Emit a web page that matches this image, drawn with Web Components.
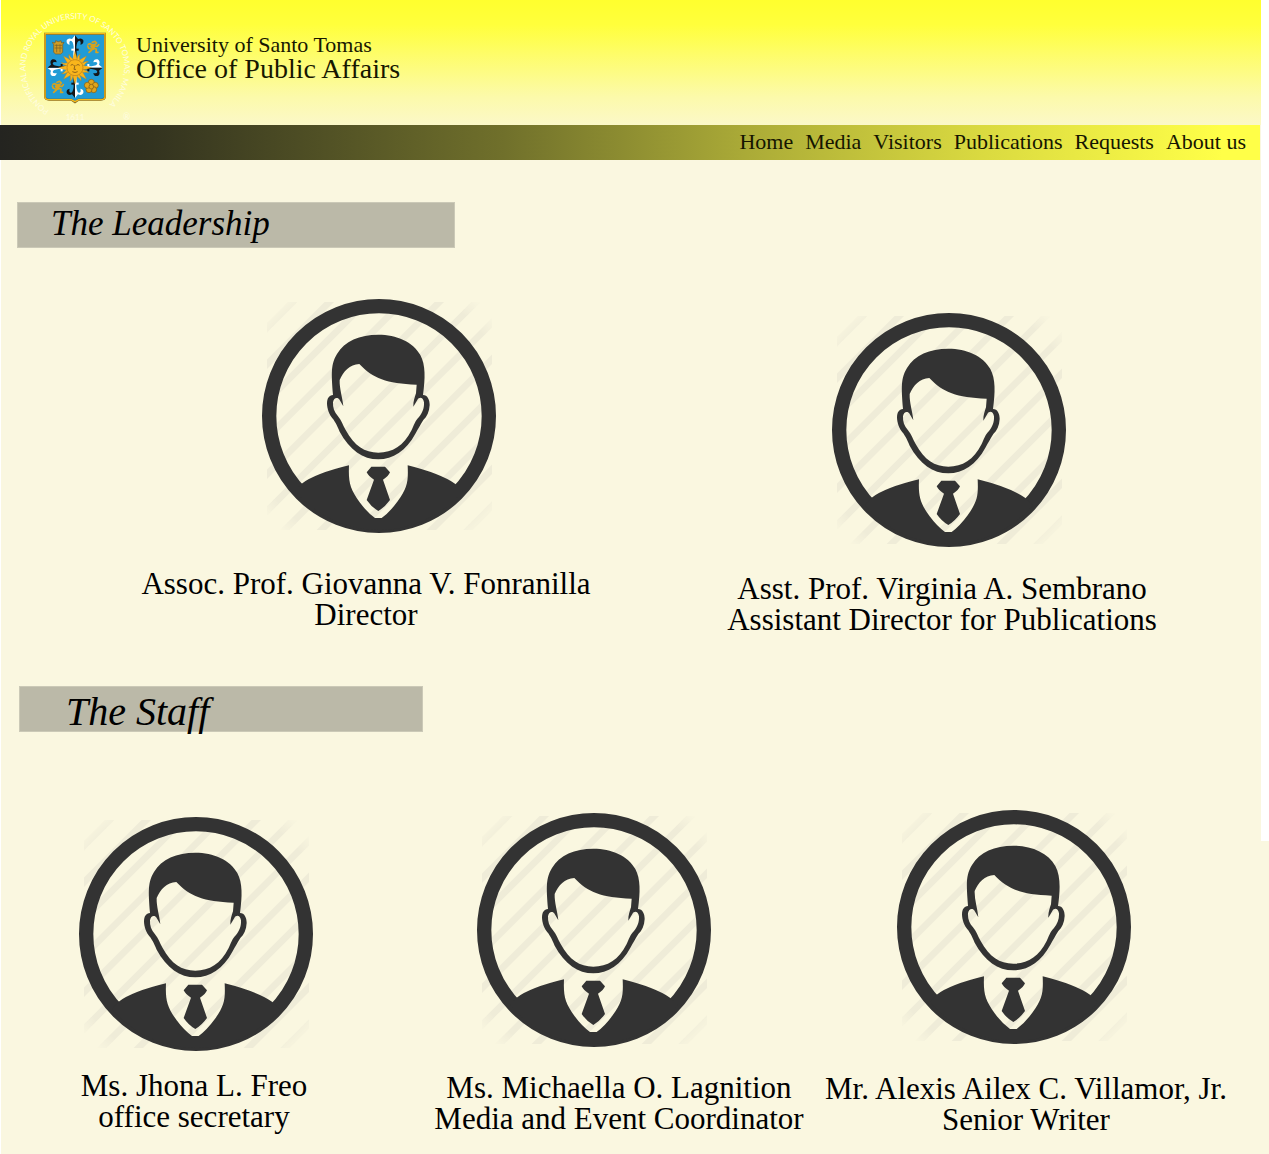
<!DOCTYPE html>
<html lang="en">
<head>
<meta charset="utf-8">
<title>UST Office of Public Affairs</title>
<style>
body { margin: 0; background: #fff; color: #000; font-family: "Liberation Serif", serif; }
</style>
</head>
<body>
<opa-page></opa-page>
<script>
const define = (name, html, setup) => {
  const template = document.createElement('template');
  template.innerHTML = html;
  customElements.define(name, class extends HTMLElement {
    constructor() {
      super();
      const root = this.attachShadow({ mode: 'open' });
      root.append(template.content.cloneNode(true));
      if (setup) setup(root);
    }
  });
};

define('ust-seal', `
<style>
:host { display: block; width: 136px; height: 125px; flex: none; }
svg { display: block; width: 136px; height: 125px; }
text { font-family: Lato, sans-serif; fill: #fffde0; }
</style>
<svg viewBox="0 0 408 375" role="img" aria-label="University seal">
  <defs>
    <path id="ring" d="M148 331A148 148 0 1 1 302 331"/>
    <g id="arm">
      <path d="M219 178L221 140Q219 122 212 122Q206 124 209 134Q198 133 200 121Q205 112 216 117L225 106V178Z" fill="#fff"/>
      <path d="M231 178L229 140Q231 122 238 122Q244 124 241 134Q252 133 250 121Q245 112 234 117L225 106V178Z" fill="#151719"/>
      <path d="M214 146H225V152H214Z" fill="#fff"/><path d="M225 146H236V152H225Z" fill="#151719"/>
    </g>
    <path id="ray" d="M217 184Q220 169 225 154Q230 169 233 184Z"/>
    <path id="wave" d="M217 184C226 177 215 170 224 159C222 170 232 175 232 184Z"/>
    <g id="lion" fill="none" stroke="#d8a31d" stroke-width="5" stroke-linecap="round" stroke-linejoin="round">
      <path d="M-3-14L5-17L10-12L5-7L-1-7L2 2L-5 9L-13 16M1 3L9 7L8 16L14 16M-1-5L-10-10L-15-8M2-3L12-2L16-7M-5 7L-14 4L-17-3"/>
      <path d="M-5-2L0 4" stroke-width="9"/>
    </g>
  </defs>
  <text font-size="24"><textPath href="#ring">PONTIFICAL AND ROYAL UNIVERSITY OF SANTO TOMAS, MANILA</textPath></text>
  <text x="225" y="361" font-size="24" text-anchor="middle">1611</text>
  <text x="380" y="361" font-size="26" text-anchor="middle">®</text>
  <path d="M135 101H315V291Q314 299 303 299H236L225 307L214 299H147Q136 299 135 291Z" fill="#219bd5" stroke="#77602a" stroke-width="6"/>
  <path d="M135 101H315V291Q314 299 303 299H236L225 305L214 299H147Q136 299 135 291Z" fill="none" stroke="#f6b916" stroke-width="4"/>
  <use href="#arm"/><use href="#arm" transform="rotate(90 225 203) translate(0 14)"/>
  <use href="#arm" transform="rotate(180 225 200)"/><use href="#arm" transform="rotate(270 225 203) translate(0 14)"/>
  <g id="sun" fill="#f9b51b" stroke="#b57e1c" stroke-width="1"></g>
  <circle cx="225" cy="203" r="24" fill="#f9b51b" stroke="#b67b1c" stroke-width="2"/>
  <path d="M212 196Q217 191 221 196M229 196Q234 191 239 196M225 195L222 208H228M217 215Q225 220 233 215" fill="none" stroke="#7d5416" stroke-width="2.5"/>
  <path d="M161 157V134L157 127L165 129L167 122L175 125L183 122L185 129L192 127L188 134V157L182 162H167Z" fill="#cf9c24" stroke="#765e25" stroke-width="2"/>
  <path d="M164 136H186M164 144H186M170 133V157M180 133V157" stroke="#765e25" stroke-width="2"/>
  <use href="#lion" transform="translate(280 141)"/><use href="#lion" transform="translate(174 261)"/>
  <g fill="#e2a51b" stroke="#775719" stroke-width="2">
    <circle cx="274" cy="247" r="9"/><circle cx="286" cy="256" r="9"/><circle cx="281" cy="269" r="9"/><circle cx="267" cy="269" r="9"/><circle cx="262" cy="256" r="9"/><circle cx="274" cy="260" r="7"/>
  </g>
</svg>`, root => {
  const sun = root.querySelector('#sun');
  for (let i = 0; i < 16; i++) {
    const ray = document.createElementNS('http://www.w3.org/2000/svg', 'use');
    ray.setAttribute('href', i % 2 ? '#wave' : '#ray');
    ray.setAttribute('transform', `rotate(${i * 22.5} 225 203)`);
    sun.append(ray);
  }
});

define('opa-header', `
<style>
:host { display: block; background: linear-gradient(90deg, #fff 1px, transparent 1px), linear-gradient(#ffff2e 0%, #ffff3c 20%, #fcfaab 78%, #fbf8c8 100%); }
header { display: flex; align-items: flex-start; height: 125px; }
h1 { margin: 0; padding-top: 33px; font-weight: 400; color: #171700; white-space: nowrap; }
span { display: block; }
.school { font-size: 22px; line-height: 24px; }
.office { font-size: 28px; line-height: 24px; }
</style>
<header>
  <ust-seal></ust-seal>
  <h1><span class="school">University of Santo Tomas</span><span class="office">Office of Public Affairs</span></h1>
</header>`);

define('opa-nav', `
<style>
:host { display: block; background: linear-gradient(90deg, #242420 0%, #33331f 12%, #70702b 40%, #aaaa37 59%, #dada40 78%, #ffff48 97%); }
nav { display: flex; justify-content: flex-end; align-items: flex-start; gap: 12px; box-sizing: border-box; height: 35px; padding: 4px 14px 0 0; }
::slotted(a) { font-size: 22px; line-height: 26px; color: #151500; text-decoration: none; white-space: nowrap; }
</style>
<nav><slot></slot></nav>`);

define('section-title', `
<style>
:host { display: block; box-sizing: border-box; height: 46px; background: #bbb9a8; border: 1px solid #cbc9b7; }
h2 { margin: 0; font-weight: 400; font-style: italic; line-height: var(--line, 44px); font-size: inherit; white-space: nowrap; }
</style>
<h2><slot></slot></h2>`);

define('person-avatar', `
<style>
:host { display: block; width: 234px; height: 234px; flex: none; }
svg { display: block; width: 100%; height: 100%; }
</style>
<svg viewBox="37 42 702 702" aria-hidden="true">
  <defs>
    <radialGradient id="fade" gradientUnits="userSpaceOnUse" cx="388" cy="393" r="456">
      <stop offset=".87" stop-color="#fff"/><stop offset="1" stop-color="#000"/>
    </radialGradient>
    <mask id="soft" maskUnits="userSpaceOnUse" x="52" y="52" width="676" height="682"><rect x="37" y="42" width="702" height="702" fill="url(#fade)"/></mask>
  </defs>
  <g id="stripes" mask="url(#soft)" stroke="#efecd8" stroke-width="20"></g>
  <g fill="#333">
    <circle cx="388" cy="393" r="329.5" fill="none" stroke="#333" stroke-width="43"/>
    <path d="M156 596Q198 565 298 541C296 590 300 610 330 652Q352 682 376 699H396Q420 682 444 649C474 606 476 590 474 541Q570 565 616 596L640 618A330 330 0 0 1 136 618Z"/>
    <path d="M365 545H406L421 562Q417 573 400 584L421 645Q405 667 386 678Q366 667 351 645L373 584Q356 573 351 562Z"/>
    <path fill-rule="evenodd" d="M250 330C245 265 243 238 262 207C285 168 330 149 386 149C440 149 490 170 512 210C528 240 527 280 520 330C534 330 540 345 540 360C539 380 532 395 521 405C512 420 505 432 498 445C468 500 430 523 386 523C340 523 300 495 270 440C262 420 255 408 250 402C238 390 232 370 232 355C232 340 238 331 250 330Z
      M329 237C300 238 281 260 270 285C269 310 278 335 281 364L270 345C264 335 252 338 250 352C249 368 254 382 265 394C275 405 279 420 288 435C314 483 345 503 386 503C428 503 462 483 486 435C493 420 496 408 508 396C518 384 524 370 523 352C520 335 508 335 503 345L491 365C490 350 496 335 499 325L501 299C410 296 370 280 329 237Z"/>
  </g>
</svg>`, root => {
  const stripes = root.querySelector('#stripes');
  for (let sum = 180; sum < 1460; sum += 110) {
    const line = document.createElementNS('http://www.w3.org/2000/svg', 'path');
    line.setAttribute('d', `M0 ${sum}L${sum} 0`);
    stripes.append(line);
  }
});

define('person-card', `
<style>
:host { display: block; }
figure { margin: 0; display: flex; flex-direction: column; align-items: center; gap: var(--gap, 24px); padding-top: var(--drop, 0); }
person-avatar { margin-left: var(--lean-right, 0); margin-right: var(--lean-left, 0); }
figcaption { font-size: 31px; line-height: 31px; text-align: center; white-space: nowrap; }
::slotted(*) { display: block; }
</style>
<figure>
  <person-avatar></person-avatar>
  <figcaption><slot name="name"></slot><slot name="role"></slot></figcaption>
</figure>`);

define('opa-page', `
<style>
:host {
  display: block;
  background:
    linear-gradient(#fff, #fff) right top / 8px 841px no-repeat,
    linear-gradient(#fff, #fff) left top / 1px 100% no-repeat,
    #faf7e0;
  padding-bottom: 20px;
}
opa-header { margin-right: 8px; }
opa-nav { margin-right: 9px; }
.leadership { width: 34.5%; margin: 42px 0 51px 17px; font-size: 35px; text-indent: 33px; --line: 42px; }
.staff { width: 31.8%; margin: 51px 0 78px 19px; font-size: 40px; text-indent: 46px; --line: 50px; }
.row { display: grid; }
.leaders { grid-template-columns: minmax(0, 732fr) minmax(0, 420fr) minmax(0, 117fr); }
.team { grid-template-columns: minmax(0, 388fr) minmax(0, 462fr) minmax(0, 352fr) minmax(0, 67fr); }
.director { --gap: 35px; --lean-right: 26px; }
.assistant { --drop: 14px; --gap: 26px; --lean-right: 14px; }
.secretary { --drop: 7px; --gap: 19px; --lean-right: 4px; }
.media { --drop: 3px; --gap: 25px; --lean-left: 50px; }
.writer { --gap: 29px; --lean-left: 24px; }
</style>
<opa-header></opa-header>
<opa-nav>
  <a href="#home">Home</a><a href="#media">Media</a><a href="#visitors">Visitors</a><a href="#publications">Publications</a><a href="#requests">Requests</a><a href="#about">About us</a>
</opa-nav>
<main>
  <section-title class="leadership">The Leadership</section-title>
  <div class="row leaders">
    <person-card class="director"><span slot="name">Assoc. Prof. Giovanna V. Fonranilla</span><span slot="role">Director</span></person-card>
    <person-card class="assistant"><span slot="name">Asst. Prof. Virginia A. Sembrano</span><span slot="role">Assistant Director for Publications</span></person-card>
  </div>
  <section-title class="staff">The Staff</section-title>
  <div class="row team">
    <person-card class="secretary"><span slot="name">Ms. Jhona L. Freo</span><span slot="role">office secretary</span></person-card>
    <person-card class="media"><span slot="name">Ms. Michaella O. Lagnition</span><span slot="role">Media and Event Coordinator</span></person-card>
    <person-card class="writer"><span slot="name">Mr. Alexis Ailex C. Villamor, Jr.</span><span slot="role">Senior Writer</span></person-card>
  </div>
</main>`);
</script>
</body>
</html>
